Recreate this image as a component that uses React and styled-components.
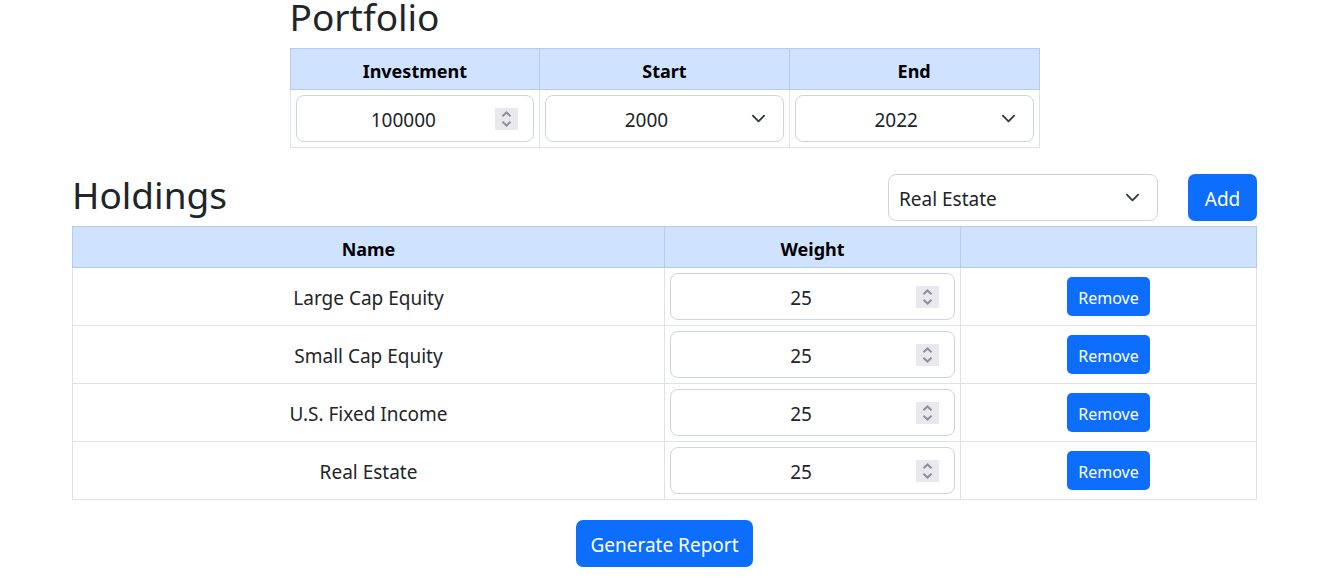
import React, { useState } from "react";
import styled, { createGlobalStyle } from "styled-components";

const GlobalStyle = createGlobalStyle`
  *, *::before, *::after { box-sizing: border-box; }
  body {
    margin: 0;
    background: #fff;
    color: #212529;
    font-family: "Segoe UI", "Noto Sans", "Open Sans", sans-serif;
    font-size: 19px;
    line-height: 30px;
  }
`;

const Page = styled.main`
  padding: 0 66px 12px 72px;
`;

const PortfolioSection = styled.section`
  max-width: 750px;
  margin: 0 auto 26px;
`;

const Heading = styled.h1`
  margin: 0;
  font-size: 37px;
  font-weight: 400;
  line-height: 34px;
`;

const PortfolioHeading = styled(Heading)`
  margin-bottom: 14px;
`;

const HoldingsBar = styled.header`
  display: flex;
  align-items: center;
  gap: 30px;
  margin-bottom: 5px;

  ${Heading} {
    flex: 1;
    line-height: 42px;
    padding-bottom: 5px;
  }
`;

const Table = styled.table`
  width: 100%;
  table-layout: fixed;
  border-collapse: collapse;
  text-align: center;
`;

const HeadCell = styled.th`
  width: ${({ $width }) => $width || "auto"};
  padding: 7px 5px 3px;
  border: 1px solid #b6cbec;
  background: #cfe2ff;
  color: #000;
  font-size: 18px;
  font-weight: 700;
`;

const Cell = styled.td`
  padding: 5px;
  border: 1px solid #dee2e6;
  vertical-align: middle;
`;

const NameCell = styled(Cell)`
  padding-top: 7px;
`;

const Field = styled.div`
  position: relative;
  width: ${({ $width }) => $width || "100%"};
`;

const NumberInput = styled.input`
  display: block;
  width: 100%;
  height: 47px;
  padding: 2px 38px 0 15px;
  border: 1px solid #ced4da;
  border-radius: 8px;
  background: #fff;
  color: inherit;
  font: inherit;
  text-align: center;
  appearance: textfield;

  &::-webkit-inner-spin-button,
  &::-webkit-outer-spin-button {
    appearance: none;
    margin: 0;
  }
`;

const Dropdown = styled.select`
  display: block;
  width: 100%;
  height: 47px;
  padding: 2px 46px 0 10px;
  border: 1px solid #ced4da;
  border-radius: 8px;
  background: #fff;
  color: inherit;
  font: inherit;
  text-align: ${({ $align }) => $align || "left"};
  text-align-last: ${({ $align }) => $align || "left"};
  appearance: none;
`;

const SpinnerIcon = styled.svg`
  position: absolute;
  top: 13px;
  right: 16px;
  width: 23px;
  height: 22px;
  background: #e9e9ed;
  pointer-events: none;
`;

const ChevronIcon = styled.svg`
  position: absolute;
  top: 16px;
  right: 18px;
  width: 15px;
  height: 15px;
  pointer-events: none;
`;

const Button = styled.button`
  min-width: 69px;
  height: 47px;
  padding: 2px 14px 0;
  border: 0;
  border-radius: 7px;
  background: #0d6efd;
  color: #fff;
  font: inherit;
  white-space: nowrap;
  cursor: pointer;
`;

const RemoveButton = styled(Button)`
  display: block;
  height: 39px;
  margin: 0 auto;
  padding: 2px 11px 0;
  border-radius: 5px;
  font-size: 16px;
`;

const Actions = styled.footer`
  display: flex;
  justify-content: center;
  margin-top: 20px;
`;

function NumberField({ label, value, onChange }) {
  return (
    <Field>
      <NumberInput
        type="number"
        aria-label={label}
        value={value}
        onChange={(e) => onChange(e.target.value)}
      />
      <SpinnerIcon viewBox="0 0 23 22" fill="none" stroke="#8f8f9d" strokeWidth="2" aria-hidden="true">
        <path d="M7.5 8.3 11.5 4.5l4 3.8M7.5 13.7l4 3.8 4-3.8" />
      </SpinnerIcon>
    </Field>
  );
}

function SelectField({ label, options, value, onChange, align, width }) {
  return (
    <Field $width={width}>
      <Dropdown
        aria-label={label}
        $align={align}
        value={value}
        onChange={(e) => onChange(e.target.value)}
      >
        {options.map((option) => (
          <option key={option}>{option}</option>
        ))}
      </Dropdown>
      <ChevronIcon viewBox="0 0 16 16" fill="none" stroke="#343a40" strokeWidth="2" strokeLinecap="round" strokeLinejoin="round" aria-hidden="true">
        <path d="m2 5 6 6 6-6" />
      </ChevronIcon>
    </Field>
  );
}

const YEARS = Array.from({ length: 23 }, (_, i) => String(2000 + i));
const ASSETS = ["Large Cap Equity", "Small Cap Equity", "U.S. Fixed Income", "Real Estate"];

export default function App() {
  const [investment, setInvestment] = useState("100000");
  const [start, setStart] = useState("2000");
  const [end, setEnd] = useState("2022");
  const [asset, setAsset] = useState("Real Estate");
  const [holdings, setHoldings] = useState(ASSETS.map((name) => ({ name, weight: "25" })));

  const setWeight = (name, weight) =>
    setHoldings(holdings.map((h) => (h.name === name ? { ...h, weight } : h)));
  const remove = (name) => setHoldings(holdings.filter((h) => h.name !== name));
  const add = () => {
    if (!holdings.some((h) => h.name === asset)) {
      setHoldings([...holdings, { name: asset, weight: "0" }]);
    }
  };

  return (
    <>
      <GlobalStyle />
      <Page>
        <PortfolioSection>
          <PortfolioHeading>Portfolio</PortfolioHeading>
          <Table>
            <thead>
              <tr>
                <HeadCell>Investment</HeadCell>
                <HeadCell>Start</HeadCell>
                <HeadCell>End</HeadCell>
              </tr>
            </thead>
            <tbody>
              <tr>
                <Cell>
                  <NumberField label="Investment" value={investment} onChange={setInvestment} />
                </Cell>
                <Cell>
                  <SelectField label="Start" options={YEARS} value={start} onChange={setStart} align="center" />
                </Cell>
                <Cell>
                  <SelectField label="End" options={YEARS} value={end} onChange={setEnd} align="center" />
                </Cell>
              </tr>
            </tbody>
          </Table>
        </PortfolioSection>

        <section>
          <HoldingsBar>
            <Heading>Holdings</Heading>
            <SelectField label="Asset class" options={ASSETS} value={asset} onChange={setAsset} width="270px" />
            <Button type="button" onClick={add}>Add</Button>
          </HoldingsBar>
          <Table>
            <thead>
              <tr>
                <HeadCell $width="50%">Name</HeadCell>
                <HeadCell $width="25%">Weight</HeadCell>
                <HeadCell $width="25%" />
              </tr>
            </thead>
            <tbody>
              {holdings.map(({ name, weight }) => (
                <tr key={name}>
                  <NameCell>{name}</NameCell>
                  <Cell>
                    <NumberField
                      label={`${name} weight`}
                      value={weight}
                      onChange={(value) => setWeight(name, value)}
                    />
                  </Cell>
                  <Cell>
                    <RemoveButton type="button" onClick={() => remove(name)}>Remove</RemoveButton>
                  </Cell>
                </tr>
              ))}
            </tbody>
          </Table>
        </section>

        <Actions>
          <Button type="button">Generate Report</Button>
        </Actions>
      </Page>
    </>
  );
}
